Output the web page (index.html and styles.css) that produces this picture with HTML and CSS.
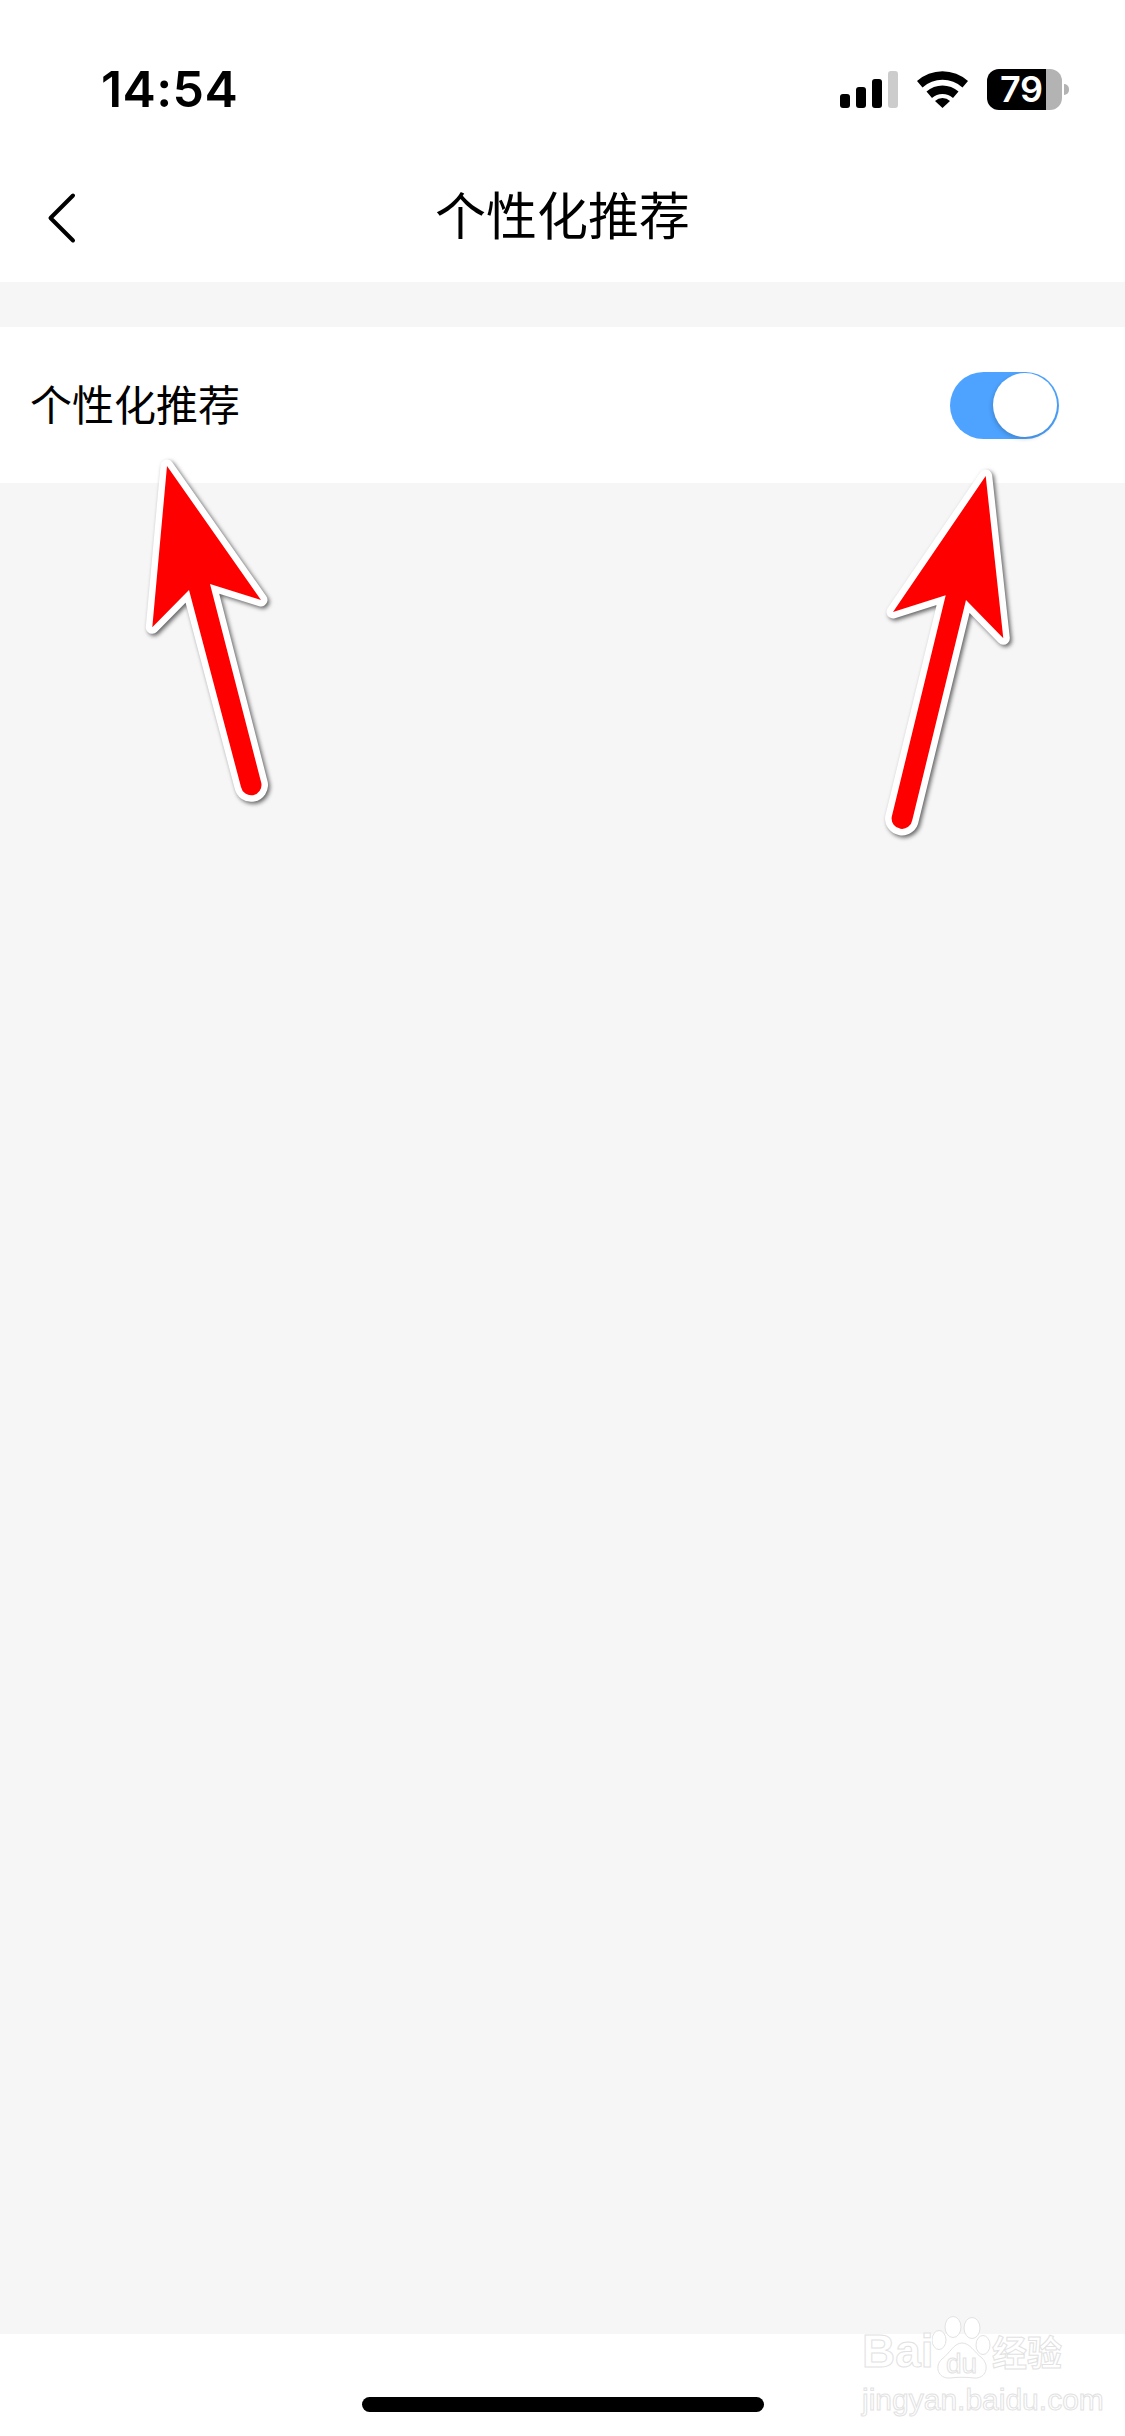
FILE: index.html
```html
<!DOCTYPE html>
<html lang="zh-CN">
  <head>
    <meta charset="utf-8" />
    <meta name="viewport" content="width=device-width, initial-scale=1.0" />
    <title>个性化推荐</title>
    <link rel="stylesheet" href="styles.css">
  </head>
  <body>
    <div class="page">
      <header class="top">
        <div class="status-bar">
          <span class="time">14:54</span>
          <div class="status-icons">
            <div class="signal">
              <span class="bar bar-1"></span>
              <span class="bar bar-2"></span>
              <span class="bar bar-3"></span>
              <span class="bar bar-4"></span>
            </div>
            <svg class="wifi" width="51" height="38" viewBox="0 0 51 38">
              <path d="M0,11 A38,38 0 0 1 51,11 L45.5,17.5 A30,30 0 0 0 5.500,17.500 Z" />
              <path d="M9.500,21.500 A24,24 0 0 1 41.500,21.500 L36,28 A16,16 0 0 0 15,28 Z" />
              <path d="M18,31 A11,11 0 0 1 33,31 L25.500,38 Z" />
            </svg>
            <div class="battery">
              <div class="battery-body">
                <span class="battery-level">79</span>
                <span class="battery-rest"></span>
              </div>
              <span class="battery-nub"></span>
            </div>
          </div>
        </div>
        <nav class="nav-bar">
          <svg class="back" width="32" height="56" viewBox="0 0 32 56">
            <path d="M26,5.500 L3.500,28 L26,50.500" />
          </svg>
          <h1 class="nav-title">个性化推荐</h1>
        </nav>
      </header>

      <main class="content">
        <div class="setting-row">
          <span class="setting-label">个性化推荐</span>
          <div class="switch"><span class="switch-knob"></span></div>
        </div>
      </main>

      <footer class="home-area">
        <span class="home-bar"></span>
      </footer>

      <!-- стрелки поверх скриншота -->
      <svg class="arrows" width="1125" height="900" viewBox="0 0 1125 900">
        <path class="arrow" d="M167,466 L261,600 L210,584 L261.300,783 A10.300,10.300 0 0 1 241,787 L189,590 L152.300,627.300 Z" />
        <path class="arrow" d="M985.700,476 L893,612 L945.700,595.300 L891.700,817 A10.300,10.300 0 0 0 912.300,820 L966,600 L1003.300,638.300 Z" />
      </svg>

      <div class="watermark">
        <div class="wm-logo">
          <span class="wm-bai">Bai</span>
          <svg class="wm-paw" width="60" height="64" viewBox="0 0 60 64">
            <ellipse cx="21" cy="11" rx="8" ry="10.500" />
            <ellipse cx="40" cy="12" rx="8" ry="10.500" />
            <ellipse cx="7" cy="24" rx="7" ry="9.500" />
            <ellipse cx="51" cy="29" rx="7" ry="9.500" />
            <path d="M30,27 C38,27 42,36 50,42 C58,50 54,63 42,62 C34,61 26,61 18,62 C6,63 2,50 10,43 C18,37 22,27 30,27 Z" />
            <text x="14" y="57">du</text>
          </svg>
          <span class="wm-cn">经验</span>
        </div>
        <div class="wm-url">jingyan.baidu.com</div>
      </div>
    </div>
  </body>
</html>
```

FILE: styles.css
```css
body,
html {
  margin: 0;
  padding: 0;
  width: 1125px;
  height: 2436px;
  overflow: hidden;
  background-color: #f6f6f6;
  font-family: "Noto Sans CJK SC", "Noto Sans", sans-serif;
  color: #000;
}

.page {
  position: relative;
  display: flex;
  flex-direction: column;
  width: 1125px;
  height: 2436px;
}

.top {
  height: 282px;
  background-color: #fff;
}

.status-bar {
  display: flex;
  align-items: center;
  justify-content: space-between;
  height: 68px;
  padding: 55px 56px 0 101px;
}

.time {
  font-family: "Inter", sans-serif;
  font-weight: 600;
  font-size: 50px;
  line-height: 48px;
  letter-spacing: 0.4px;
}

.status-icons {
  display: flex;
  align-items: center;
  gap: 19px;
}

.signal {
  display: flex;
  align-items: flex-end;
  gap: 6px;
  height: 37px;
}

.bar {
  width: 10px;
  border-radius: 3px;
  background-color: #000;
}

.bar-1 {
  height: 14px;
}

.bar-2 {
  height: 21px;
}

.bar-3 {
  height: 29px;
}

.bar-4 {
  height: 37px;
  background-color: #ccc;
}

.wifi {
  display: block;
  fill: #000;
}

.battery {
  display: flex;
  align-items: center;
  gap: 2px;
}

.battery-body {
  display: flex;
  width: 75px;
  height: 41px;
}

.battery-level {
  width: 59px;
  padding-left: 13px;
  box-sizing: border-box;
  border-radius: 12px 0 0 12px;
  background-color: #000;
  color: #fff;
  font-family: "Inter", sans-serif;
  font-weight: 600;
  font-size: 36px;
  line-height: 41px;
  letter-spacing: -0.5px;
  white-space: nowrap;
}

.battery-rest {
  flex: 1;
  border-radius: 0 12px 12px 0;
  background-color: #b3b3b3;
}

.battery-nub {
  width: 5px;
  height: 11px;
  border-radius: 0 6px 6px 0;
  background-color: #b3b3b3;
}

.nav-bar {
  position: relative;
  display: flex;
  align-items: center;
  justify-content: center;
  height: 110px;
  margin-top: 39px;
}

.back {
  position: absolute;
  left: 47px;
  top: 28px;
  fill: none;
  stroke: #000;
  stroke-width: 4px;
  stroke-linecap: round;
  stroke-linejoin: round;
}

.nav-title {
  margin: 0 0 8px;
  font-weight: 400;
  font-size: 51px;
  line-height: 70px;
}

.content {
  flex: 1;
  padding-top: 45px;
}

.setting-row {
  display: flex;
  align-items: center;
  justify-content: space-between;
  height: 156px;
  padding: 0 66px 0 30px;
  background-color: #fff;
}

.setting-label {
  margin-bottom: 4px;
  font-size: 42px;
  line-height: 60px;
}

.switch {
  display: flex;
  justify-content: flex-end;
  align-items: center;
  width: 109px;
  height: 67px;
  padding-right: 2px;
  box-sizing: border-box;
  border-radius: 34px;
  background-color: #4da3ff;
}

.switch-knob {
  width: 64px;
  height: 64px;
  border-radius: 50%;
  background-color: #fff;
  box-shadow: -1px 2px 4px rgba(0, 0, 0, 0.18);
}

.home-area {
  display: flex;
  justify-content: center;
  height: 102px;
  background-color: #fff;
}

.home-bar {
  width: 402px;
  height: 15px;
  margin-top: 63px;
  border-radius: 8px;
  background-color: #000;
}

.arrows {
  position: absolute;
  left: 0;
  top: 0;
}

.arrow {
  fill: #f00;
  stroke: #fff;
  stroke-width: 13px;
  stroke-linejoin: round;
  paint-order: stroke;
  filter: drop-shadow(2px 2px 2px rgba(0, 0, 0, 0.6));
}

.watermark {
  position: absolute;
  left: 862px;
  top: 2316px;
  width: 204px;
  color: #fff;
  -webkit-text-stroke: 1px #e2e2e2;
}

.wm-logo {
  display: flex;
  align-items: flex-end;
  height: 64px;
}

.wm-bai {
  width: 70px;
  font-family: "Liberation Sans", sans-serif;
  font-weight: 700;
  font-size: 46px;
  line-height: 58px;
}

.wm-paw {
  display: block;
  flex: none;
  fill: #fff;
  stroke: #e2e2e2;
  stroke-width: 1px;
}

.wm-paw text {
  font-family: "Liberation Sans", sans-serif;
  font-size: 28px;
}

.wm-cn {
  font-weight: 700;
  font-size: 35px;
  line-height: 58px;
  white-space: nowrap;
}

.wm-url {
  margin-top: 3px;
  font-family: "Liberation Sans", sans-serif;
  font-size: 30px;
  line-height: 34px;
  white-space: nowrap;
}
```
